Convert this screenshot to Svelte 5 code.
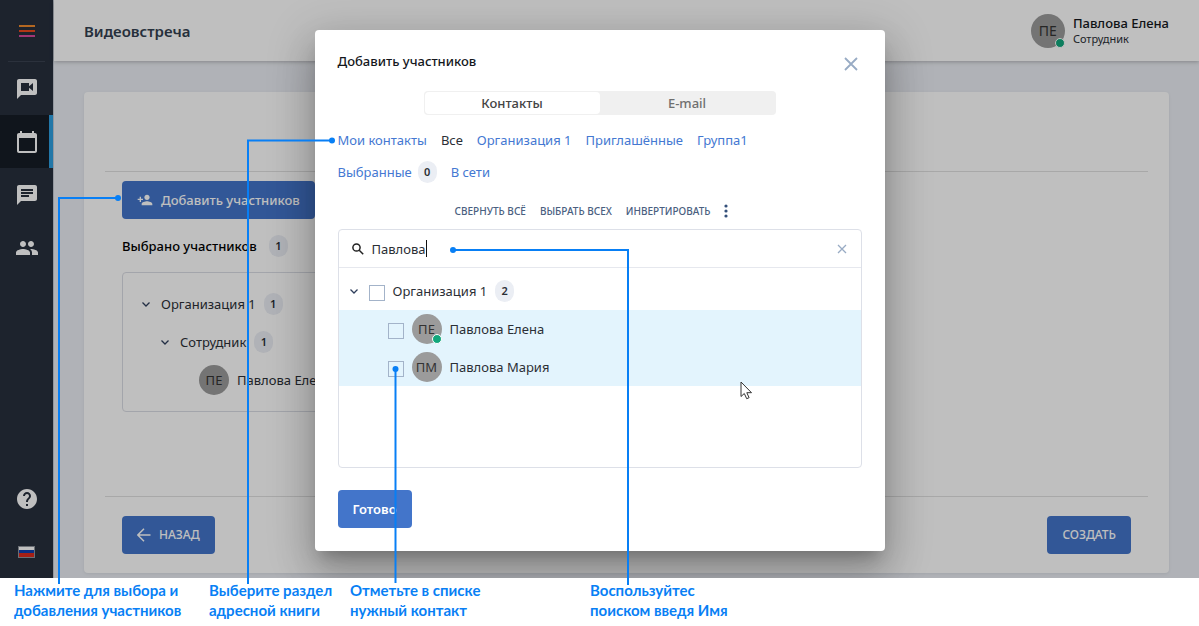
<script lang="ts">
	type Contact = {
		initials: string;
		name: string;
		online: boolean;
		checked: boolean;
	};

	let search: string = $state('Павлова');
	let tab: string = $state('contacts');
	let group: string = $state('Все');
	let orgChecked: boolean = $state(false);

	let contacts: Contact[] = $state([
		{ initials: 'ПЕ', name: 'Павлова Елена', online: true, checked: false },
		{ initials: 'ПМ', name: 'Павлова Мария', online: false, checked: false }
	]);

	const groups: string[] = [
		'Мои контакты',
		'Все',
		'Организация 1',
		'Приглашённые',
		'Группа1',
		'Выбранные',
		'В сети'
	];

	const selectedCount = $derived(contacts.filter((c) => c.checked).length);

	const navItems = [
		{
			label: 'Видеовстречи',
			active: false,
			path: 'M20 2H4c-1.1 0-1.99.9-1.99 2L2 22l4-4h14c1.1 0 2-.9 2-2V4c0-1.1-.9-2-2-2zm-2 12l-4-3.2V14H6V6h8v3.2L18 6v8z'
		},
		{
			label: 'Календарь',
			active: true,
			path: 'M20 3h-1V1h-2v2H7V1H5v2H4c-1.1 0-2 .9-2 2v16c0 1.1.9 2 2 2h16c1.1 0 2-.9 2-2V5c0-1.1-.9-2-2-2zm0 18H4V8h16v13z'
		},
		{
			label: 'Чаты',
			active: false,
			path: 'M20 2H4c-1.1 0-1.99.9-1.99 2L2 22l4-4h14c1.1 0 2-.9 2-2V4c0-1.1-.9-2-2-2zM6 9h12v2H6V9zm8 5H6v-2h8v2zm4-6H6V6h12v2z'
		},
		{
			label: 'Контакты',
			active: false,
			path: 'M16 11c1.66 0 2.99-1.34 2.99-3S17.66 5 16 5c-1.66 0-3 1.34-3 3s1.34 3 3 3zm-8 0c1.66 0 2.99-1.34 2.99-3S9.66 5 8 5C6.34 5 5 6.34 5 8s1.34 3 3 3zm0 2c-2.33 0-7 1.17-7 3.5V19h14v-2.5c0-2.33-4.67-3.5-7-3.5zm8 0c-.29 0-.62.02-.97.05 1.16.84 1.97 1.97 1.97 3.45V19h6v-2.5c0-2.33-4.67-3.5-7-3.5z'
		}
	];

	function toggleAll(value: boolean): void {
		contacts.forEach((c) => (c.checked = value));
		orgChecked = value;
	}

	function invert(): void {
		contacts.forEach((c) => (c.checked = !c.checked));
	}
</script>

{#snippet chevron()}
	<svg class="chevron" viewBox="0 0 10 10" width="10" height="10" aria-hidden="true">
		<path d="M1.500 3.500 5 7l3.500-3.500" />
	</svg>
{/snippet}

<div class="guide">
	<div class="app">
		<aside class="sidebar">
			<button class="menu" aria-label="Меню">
				<svg viewBox="0 0 16 12" width="16" height="12">
					<rect y="0" width="16" height="2" fill="#ef8a2c" />
					<rect y="5" width="16" height="2" fill="#ee4a1c" />
					<rect y="10" width="16" height="2" fill="#d8489c" />
				</svg>
			</button>
			{#each navItems as item}
				<button class="nav-item" class:active={item.active} aria-label={item.label}>
					<svg viewBox="0 0 24 24" width="24" height="24"><path d={item.path} /></svg>
				</button>
			{/each}
			<button class="nav-item help" aria-label="Помощь">
				<svg viewBox="0 0 24 24" width="24" height="24">
					<path
						d="M12 2C6.48 2 2 6.48 2 12s4.48 10 10 10 10-4.48 10-10S17.52 2 12 2zm1 17h-2v-2h2v2zm2.07-7.75l-.9.92C13.45 12.9 13 13.5 13 15h-2v-.5c0-1.1.45-2.1 1.17-2.83l1.24-1.26c.37-.36.59-.86.59-1.41 0-1.1-.9-2-2-2s-2 .9-2 2H8c0-2.21 1.79-4 4-4s4 1.79 4 4c0 .88-.36 1.68-.93 2.25z"
					/>
				</svg>
			</button>
			<button class="nav-item" aria-label="Язык">
				<svg viewBox="0 0 17 12" width="17" height="12">
					<rect width="17" height="12" fill="#8f949c" />
					<rect x="1" y="1" width="15" height="4" fill="#fff" />
					<rect x="1" y="4" width="15" height="4" fill="#0e3fb0" />
					<rect x="1" y="7" width="15" height="4" fill="#dc2a1c" />
				</svg>
			</button>
		</aside>

		<div class="page">
			<header class="header">
				<h1>Видеовстреча</h1>
				<div class="user">
					<span class="avatar large">ПЕ<i class="online"></i></span>
					<div>
						<div class="user-name">Павлова Елена</div>
						<div class="user-role">Сотрудник</div>
					</div>
				</div>
			</header>

			<main class="content">
				<section class="card">
					<div class="card-body">
						<button class="btn add">
							<svg viewBox="0 0 24 24" width="16" height="16">
								<path
									d="M15 12c2.21 0 4-1.79 4-4s-1.79-4-4-4-4 1.79-4 4 1.79 4 4 4zm-9-2V7H4v3H1v2h3v3h2v-3h3v-2H6zm9 4c-2.67 0-8 1.34-8 4v2h16v-2c0-2.66-5.33-4-8-4z"
								/>
							</svg>
							Добавить участников
						</button>
						<div class="chosen">Выбрано участников <span class="badge">1</span></div>
						<div class="tree">
							<div class="tree-row">{@render chevron()} Организация 1 <span class="badge">1</span></div>
							<div class="tree-row level-2">
								{@render chevron()} Сотрудник <span class="badge">1</span>
							</div>
							<div class="tree-row level-3"><span class="avatar">ПЕ</span> Павлова Елена</div>
						</div>
					</div>
					<footer class="card-footer">
						<button class="btn back">
							<svg viewBox="0 0 14 14" width="14" height="14">
								<path d="M13.500 7H1M7 .8.800 7 7 13.200" />
							</svg>
							НАЗАД
						</button>
						<button class="btn">СОЗДАТЬ</button>
					</footer>
				</section>
			</main>
		</div>

		<div class="overlay">
			<div class="modal" role="dialog" aria-labelledby="modal-title">
				<div class="modal-head">
					<h2 id="modal-title">Добавить участников</h2>
					<button class="icon-btn" aria-label="Закрыть">
						<svg class="cross" viewBox="0 0 14 14" width="14" height="14">
							<path d="M1 1l12 12M13 1 1 13" />
						</svg>
					</button>
				</div>

				<div class="tabs">
					<button class:current={tab === 'contacts'} onclick={() => (tab = 'contacts')}>Контакты</button>
					<button class:current={tab === 'email'} onclick={() => (tab = 'email')}>E-mail</button>
				</div>

				<nav class="groups">
					{#each groups as name}
						<a
							href="#{name}"
							class:current={group === name}
							onclick={(e) => {
								e.preventDefault();
								group = name;
							}}
							>{name}{#if name === 'Выбранные'}<span class="badge">{selectedCount}</span>{/if}</a
						>
					{/each}
				</nav>

				<div class="actions">
					<button>СВЕРНУТЬ ВСЁ</button>
					<button onclick={() => toggleAll(true)}>ВЫБРАТЬ ВСЕХ</button>
					<button onclick={invert}>ИНВЕРТИРОВАТЬ</button>
					<button aria-label="Ещё">
						<svg viewBox="0 0 4 14" width="4" height="14">
							<circle cx="2" cy="2" r="1.6" />
							<circle cx="2" cy="7" r="1.6" />
							<circle cx="2" cy="12" r="1.6" />
						</svg>
					</button>
				</div>

				<div class="list">
					<div class="search">
						<svg class="lens" viewBox="0 0 12 12" width="12" height="12" aria-hidden="true">
							<circle cx="4.5" cy="4.5" r="3.6" />
							<path d="M7.200 7.200 11.200 11.200" />
						</svg>
						<input type="text" aria-label="Поиск" bind:value={search} />
						<span class="caret"></span>
						<button class="icon-btn clear" aria-label="Очистить" onclick={() => (search = '')}>
							<svg class="cross" viewBox="0 0 10 10" width="10" height="10">
								<path d="M1 1l8 8M9 1 1 9" />
							</svg>
						</button>
					</div>
					<div class="org">
						{@render chevron()}
						<input type="checkbox" id="org" bind:checked={orgChecked} />
						<label for="org">Организация 1</label>
						<span class="badge">{contacts.length}</span>
					</div>
					{#each contacts as contact, i}
						<div class="contact">
							<input type="checkbox" id="contact-{i}" bind:checked={contact.checked} />
							<span class="avatar">
								{contact.initials}
								{#if contact.online}<i class="online"></i>{/if}
							</span>
							<label for="contact-{i}">{contact.name}</label>
						</div>
					{/each}
				</div>

				<button class="btn done">Готово</button>
			</div>
		</div>
	</div>

	<div class="captions">
		<p>Нажмите для выбора и<br />добавления участников</p>
		<p>Выберите раздел<br />адресной книги</p>
		<p>Отметьте в списке<br />нужный контакт</p>
		<p>Воспользуйтес<br />поиском введя Имя</p>
	</div>

	<!-- callout lines over the window -->
	<svg class="callouts" width="1199" height="626" viewBox="0 0 1199 626" aria-hidden="true">
		<path d="M118 198H59V584" />
		<path d="M332 140.5H248V584" />
		<path d="M395.5 369V583" />
		<path d="M453 250H628V585" />
		<circle cx="118" cy="198" r="3" />
		<circle cx="332" cy="140.5" r="3" />
		<circle cx="395.5" cy="369" r="3" />
		<circle cx="453" cy="250" r="3" />
	</svg>

	<svg class="pointer" viewBox="0 0 13 19" width="13" height="19" aria-hidden="true">
		<path d="M1 1v14.500l3.300-3 2.400 5.200 2.400-1-2.300-5H11.500z" />
	</svg>
</div>

<style>
	:global(body) {
		margin: 0;
		background: #fff;
	}

	.guide {
		position: relative;
		overflow: hidden;
		font-family: 'Noto Sans', 'Open Sans', sans-serif;
		font-size: 13px;
		line-height: 20px;
		color: #2b2f36;
	}

	button {
		font: inherit;
		color: inherit;
		border: 0;
		padding: 0;
		background: none;
		cursor: pointer;
	}

	h1,
	h2,
	p {
		margin: 0;
	}

	.app {
		position: relative;
		display: flex;
		overflow: hidden;
	}

	/* sidebar */
	.sidebar {
		width: 53px;
		flex: none;
		display: flex;
		flex-direction: column;
		border-right: 1px solid #c5cad3;
		background: #272f3d;
	}
	.menu {
		height: 62px;
		margin: 0 8px;
		border-bottom: 1px solid #3a4250;
	}
	.menu svg,
	.nav-item svg {
		display: block;
		margin: 0 auto;
	}
	.nav-item {
		height: 53px;
		fill: #fff;
	}
	.nav-item.active {
		background: #161c26;
		border-right: 4px solid #2e9fe0;
		padding-left: 4px;
	}
	.help {
		margin-top: auto;
	}

	/* page behind the dialog */
	.page {
		flex: 1;
		min-width: 0;
		background: #ebeef4;
	}
	.header {
		position: relative;
		height: 61px;
		display: flex;
		align-items: center;
		justify-content: space-between;
		padding: 0 30px;
		background: #fff;
		box-shadow: 0 1px 4px rgba(0, 0, 0, 0.25);
	}
	h1 {
		font-size: 15px;
		font-weight: 600;
		color: #333f50;
	}
	.user {
		display: flex;
		align-items: center;
		gap: 8px;
	}
	.user-name {
		font-weight: 500;
		line-height: 16px;
		color: #14171c;
	}
	.user-role {
		font-size: 11px;
		line-height: 15px;
	}

	.avatar {
		position: relative;
		flex: none;
		width: 30px;
		height: 30px;
		border-radius: 50%;
		background: #9b9b9b;
		color: #333;
		line-height: 30px;
		text-align: center;
	}
	.avatar.large {
		width: 34px;
		height: 34px;
		font-size: 14px;
		line-height: 34px;
	}
	.online {
		position: absolute;
		right: 0;
		bottom: 0;
		width: 8px;
		height: 8px;
		border: 1px solid #fff;
		border-radius: 50%;
		background: #12a77c;
	}

	.content {
		padding: 31px 30px 5px;
	}
	.card {
		padding: 79px 21px 0;
		border-radius: 4px;
		background: #fff;
		box-shadow: 0 1px 3px rgba(60, 70, 100, 0.1);
	}
	.card-body {
		min-height: 315px;
		padding: 9px 17px 0;
		border-top: 1px solid #e0e0e0;
		border-bottom: 1px solid #e0e0e0;
	}
	.card-footer {
		display: flex;
		justify-content: space-between;
		padding: 19px 17px;
	}

	.btn {
		display: flex;
		align-items: center;
		height: 38px;
		padding: 0 15px;
		border-radius: 4px;
		background: #4375ca;
		color: #fff;
		font-size: 12px;
		font-weight: 500;
	}
	.add {
		gap: 8px;
		font-size: 13px;
	}
	.add svg {
		fill: #fff;
	}
	.back {
		gap: 8px;
	}
	.back path {
		fill: none;
		stroke: #fff;
		stroke-width: 1.5;
	}

	.chosen {
		display: flex;
		align-items: center;
		gap: 12px;
		height: 53px;
		font-weight: 500;
		color: #000;
	}
	.badge {
		display: inline-block;
		box-sizing: border-box;
		min-width: 19px;
		padding: 0 6px;
		border-radius: 10px;
		background: #ebeef4;
		color: #2b2f36;
		font-size: 11px;
		font-weight: 600;
		line-height: 22px;
		text-align: center;
	}
	.tree {
		width: 46%;
		padding: 12px 18px;
		box-sizing: border-box;
		border: 1px solid #dadde4;
		border-radius: 4px;
	}
	.tree-row {
		display: flex;
		align-items: center;
		gap: 8px;
		height: 38px;
	}
	.level-2 {
		padding-left: 19px;
	}
	.level-3 {
		padding-left: 58px;
	}
	.chevron {
		flex: none;
		margin-right: 2px;
		fill: none;
		stroke: #2f3f5c;
		stroke-width: 1.3;
	}

	/* dialog */
	.overlay {
		position: absolute;
		inset: 0;
		display: flex;
		align-items: flex-start;
		justify-content: center;
		padding-top: 30px;
		background: rgba(0, 0, 0, 0.25);
	}
	.modal {
		box-sizing: border-box;
		width: 570px;
		max-width: 100%;
		padding: 21px 23px 23px;
		border-radius: 4px;
		background: #fff;
		box-shadow:
			0 11px 15px -7px rgba(0, 0, 0, 0.24),
			0 9px 46px 8px rgba(0, 0, 0, 0.14),
			0 24px 38px 3px rgba(0, 0, 0, 0.16);
	}
	.modal-head {
		display: flex;
		justify-content: space-between;
	}
	h2 {
		font-size: 13px;
		font-weight: 500;
		color: #14171c;
	}
	.icon-btn {
		display: flex;
		align-items: center;
		padding: 6px 4px;
	}
	.cross {
		fill: none;
		stroke: #98abc4;
		stroke-width: 1.8;
	}
	.clear .cross {
		stroke-width: 1.3;
	}
	.tabs {
		display: flex;
		width: 352px;
		margin: 14px auto 13px;
		padding: 1px;
		box-sizing: border-box;
		border-radius: 4px;
		background: #f0f0f0;
	}
	.tabs button {
		flex: 1;
		border-radius: 4px;
		font-weight: 500;
		line-height: 22px;
		color: #6f6f6f;
	}
	.tabs .current {
		background: #fff;
		color: #444;
	}
	.groups {
		display: flex;
		flex-wrap: wrap;
		gap: 8px 14px;
		padding-right: 80px;
	}
	.groups a {
		display: flex;
		align-items: center;
		gap: 6px;
		height: 24px;
		color: #4478d2;
		text-decoration: none;
	}
	.groups .current {
		color: #2b2f36;
	}
	.actions {
		display: flex;
		align-items: center;
		justify-content: center;
		gap: 14px;
		height: 20px;
		margin: 17px 0 8px;
		padding-right: 16px;
		font-size: 10px;
		font-weight: 500;
		color: #4a6080;
	}
	.actions svg {
		display: block;
		fill: #34507a;
	}

	.list {
		min-height: 237px;
		border: 1px solid #dde0e8;
		border-radius: 4px;
	}
	.search {
		display: flex;
		align-items: center;
		height: 37px;
		padding: 0 10px 0 13px;
		border-bottom: 1px solid #e6e8ee;
	}
	.lens {
		margin-right: 8px;
		fill: none;
		stroke: #222;
		stroke-width: 1.5;
	}
	.search input {
		field-sizing: content;
		border: 0;
		padding: 0;
		outline: 0;
		background: none;
		color: inherit;
		font: inherit;
	}
	.caret {
		width: 1px;
		height: 17px;
		background: #111;
	}
	.clear {
		margin-left: auto;
	}
	.org,
	.contact {
		display: flex;
		align-items: center;
		gap: 8px;
		height: 38px;
	}
	.org {
		padding: 4px 0 0 10px;
	}
	.contact {
		padding-left: 49px;
		background: #e3f4fd;
	}
	input[type='checkbox'] {
		appearance: none;
		box-sizing: border-box;
		width: 16px;
		height: 16px;
		margin: 4px 0 0;
		border: 1px solid #a3b3c9;
	}
	input[type='checkbox']:checked {
		background: #4375ca;
	}
	.done {
		margin-top: 22px;
		font-size: 13px;
		font-weight: 600;
	}

	/* explanations */
	.captions {
		display: grid;
		grid-template-columns: 195px 141px 240px auto;
		padding: 2px 0 6px 14px;
		font-family: Lato, 'Open Sans', sans-serif;
		font-size: 15px;
		font-weight: 700;
		color: #087ff5;
	}
	.callouts {
		position: absolute;
		top: 0;
		left: 0;
		pointer-events: none;
	}
	.callouts path {
		fill: none;
		stroke: #087ff5;
		stroke-width: 2;
	}
	.callouts circle {
		fill: #087ff5;
	}
	.pointer {
		position: absolute;
		top: 381px;
		left: 740px;
		pointer-events: none;
	}
	.pointer path {
		fill: #fff;
		stroke: #333;
		stroke-width: 1;
	}
</style>
